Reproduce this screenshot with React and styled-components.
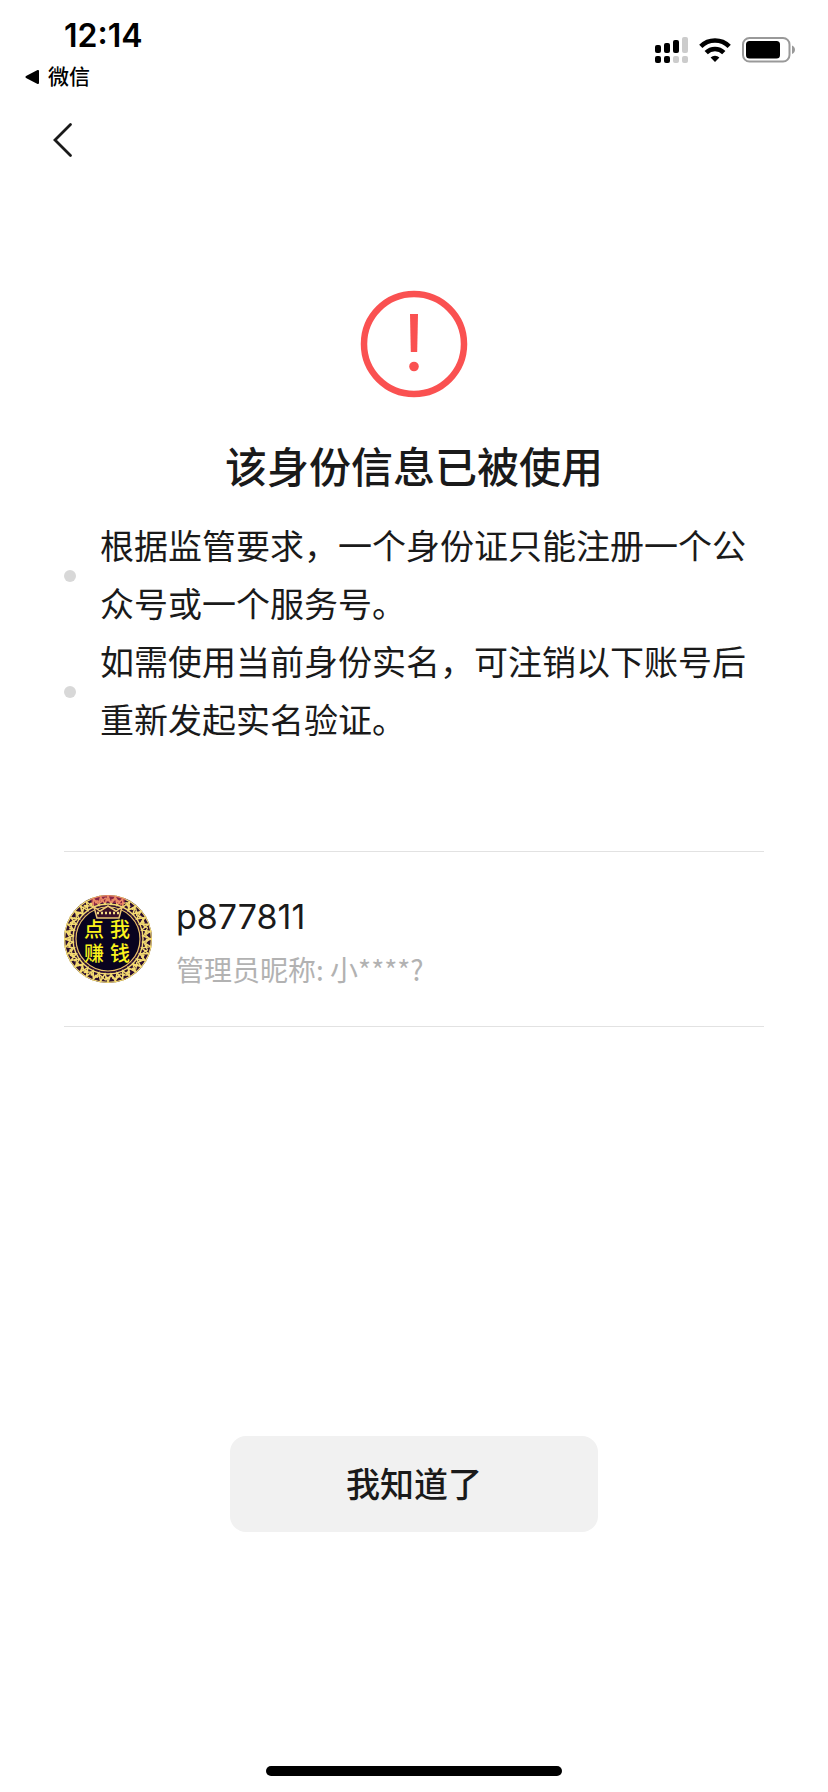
import styled, { createGlobalStyle } from "styled-components";

const GlobalStyle = createGlobalStyle`
  * {
    box-sizing: border-box;
  }
  body {
    margin: 0;
    background: #fff;
    color: #1a1a1a;
    font-family: Inter, "Noto Sans CJK SC", sans-serif;
  }
`;

const Page = styled.div`
  min-height: 100vh;
  display: flex;
  flex-direction: column;
`;

const StatusBar = styled.header`
  display: flex;
  justify-content: space-between;
  align-items: flex-start;
  padding: 16px 32px 0 24px;
  height: 100px;
  color: #000;
`;

const StatusLeft = styled.div`
  display: flex;
  flex-direction: column;
`;

const Time = styled.time`
  padding-left: 40px;
  font-size: 32px;
  line-height: 40px;
  font-weight: 600;
`;

const BackToApp = styled.a`
  display: flex;
  align-items: center;
  gap: 8px;
  color: #000;
  font-size: 21px;
  line-height: 42px;
  font-weight: 500;
  text-decoration: none;
`;

const StatusIcons = styled.div`
  display: flex;
  align-items: center;
  gap: 11px;
  padding-top: 21px;
`;

const Nav = styled.nav`
  display: flex;
  padding: 16px 44px;
`;

const BackButton = styled.button`
  display: flex;
  padding: 4px 8px;
  border: none;
  background: none;
  cursor: pointer;
`;

const Main = styled.main`
  flex-grow: 1;
  display: flex;
  flex-direction: column;
  padding: 110px 64px 0;
`;

const WarningIcon = styled.svg`
  display: block;
  align-self: center;
  flex-shrink: 0;
`;

const Title = styled.h1`
  margin: 40px 0 20px;
  font-size: 42px;
  line-height: 60px;
  font-weight: 500;
  text-align: center;
`;

const Reasons = styled.ul`
  list-style: none;
  margin: 0;
  padding: 0;
`;

const Reason = styled.li`
  display: flex;
  align-items: center;
  gap: 24px;
  font-size: 34px;
  line-height: 58px;

  &::before {
    content: "";
    flex-shrink: 0;
    width: 12px;
    height: 12px;
    border-radius: 50%;
    background: #d8d8d8;
  }
`;

const Account = styled.section`
  display: flex;
  align-items: center;
  gap: 24px;
  height: 176px;
  margin-top: 101px;
  border-top: 1px solid #e2e2e2;
  border-bottom: 1px solid #e2e2e2;
`;

const AccountText = styled.div`
  display: flex;
  flex-direction: column;
  gap: 4px;
  padding-top: 8px;
`;

const AccountName = styled.div`
  font-size: 34px;
  line-height: 48px;
`;

const AccountAdmin = styled.div`
  color: #b2b2b2;
  font-family: "Noto Sans CJK SC", sans-serif;
  font-size: 28px;
  line-height: 48px;
`;

const Footer = styled.footer`
  display: flex;
  flex-direction: column;
  align-items: center;
  padding-bottom: 16px;
`;

const ConfirmButton = styled.button`
  width: 368px;
  height: 96px;
  margin-bottom: 234px;
  padding: 0 0 4px;
  border: none;
  border-radius: 16px;
  background: #f1f1f1;
  color: #1a1a1a;
  font-family: inherit;
  font-size: 34px;
  font-weight: 500;
  cursor: pointer;
`;

const HomeIndicator = styled.div`
  width: 296px;
  height: 10px;
  border-radius: 5px;
  background: #000;
`;

const reasons = [
  "根据监管要求，一个身份证只能注册一个公众号或一个服务号。",
  "如需使用当前身份实名，可注销以下账号后重新发起实名验证。",
];

function SignalIcon() {
  return (
    <svg width="33" height="26" viewBox="0 0 33 26">
      <g fill="#000">
        <rect x="0" y="8" width="6" height="8" rx="2" />
        <rect x="9" y="6" width="6" height="10" rx="2" />
        <rect x="18" y="3" width="6" height="13" rx="2" />
        <rect x="0" y="19" width="6" height="7" rx="2" />
        <rect x="9" y="19" width="6" height="7" rx="2" />
      </g>
      <g fill="#ccc">
        <rect x="27" y="0" width="6" height="16" rx="2" />
        <rect x="18" y="19" width="6" height="7" rx="2" />
        <rect x="27" y="19" width="6" height="7" rx="2" />
      </g>
    </svg>
  );
}

function WifiIcon() {
  return (
    <svg width="32" height="24" viewBox="0 0 32 24">
      <g fill="none" stroke="#000" strokeWidth="4.6">
        <path d="M1.8 8.4a20.2 20.2 0 0 1 28.4 0" />
        <path d="M7.2 14.6a12.5 12.5 0 0 1 17.6 0" />
      </g>
      <path d="M16 24l-4.4-4.4a6.2 6.2 0 0 1 8.8 0z" fill="#000" />
    </svg>
  );
}

function BatteryIcon() {
  return (
    <svg width="54" height="26" viewBox="0 0 54 26">
      <rect x="1" y="1" width="46.5" height="23.5" rx="6.5" fill="none" stroke="#999" strokeWidth="2" />
      <rect x="4" y="4" width="34" height="17.5" rx="3.5" fill="#000" />
      <path d="M50 8.5c2 .8 3 2.4 3 4.300s-1 3.500-3 4.300z" fill="#999" />
    </svg>
  );
}

// points of a zigzag that runs round the avatar between two radii
function zigzag(inner, outer, count) {
  return Array.from({ length: count * 2 }, (_, i) => {
    const angle = (Math.PI * i) / count;
    const r = i % 2 ? inner : outer;
    return `${44 + r * Math.cos(angle)},${44 + r * Math.sin(angle)}`;
  }).join(" ");
}

function Avatar() {
  return (
    <svg width="88" height="88" viewBox="0 0 88 88">
      <circle cx="44" cy="44" r="44" fill="#2a0c30" />
      <g fill="none" stroke="#f3da72">
        <circle cx="44" cy="44" r="43.4" strokeWidth="1.2" />
        <polygon points={zigzag(35, 43, 36)} strokeWidth="1.5" />
        <polygon points={zigzag(37, 41, 23)} strokeWidth="1.2" />
        <circle cx="44" cy="44" r="39" strokeWidth="2.4" strokeDasharray="2 3 4 2" />
        <circle cx="44" cy="44" r="35" strokeWidth="1.4" />
      </g>
      <path d="M26 4a44 44 0 0 1 36 0l-3 7a36 36 0 0 0-30 0z" fill="#e23a5c" opacity=".5" />
      <circle cx="44" cy="44" r="32" fill="#09031f" stroke="#e8c068" strokeWidth="1.2" />
      <path d="M30 12l3 11h22l3-11-6 4-8-5-8 5z" fill="#3a1028" stroke="#edc977" strokeWidth="1.5" />
      <path d="M33 18h22" stroke="#f5df86" strokeWidth="2.5" strokeDasharray="2 2" />
      <g fill="#fbf31c" fontFamily="Noto Sans CJK SC, sans-serif" fontSize="20" fontWeight="500">
        <text x="20" y="42">
          点<tspan x="46">我</tspan>
        </text>
        <text x="20" y="66">
          赚<tspan x="46">钱</tspan>
        </text>
      </g>
    </svg>
  );
}

export default function App() {
  return (
    <>
      <GlobalStyle />
      <Page>
        <StatusBar>
          <StatusLeft>
            <Time>12:14</Time>
            <BackToApp href="#">
              <svg width="16" height="14" viewBox="0 0 16 14">
                <path d="M14 1v12L2.5 7z" stroke="#000" strokeWidth="2" strokeLinejoin="round" />
              </svg>
              微信
            </BackToApp>
          </StatusLeft>
          <StatusIcons>
            <SignalIcon />
            <WifiIcon />
            <BatteryIcon />
          </StatusIcons>
        </StatusBar>
        <Nav>
          <BackButton aria-label="返回">
            <svg width="22" height="40" viewBox="0 0 22 40" fill="none">
              <path d="M18.5 4.500L3 20l15.500 15.500" stroke="#1a1a1a" strokeWidth="2.8" strokeLinecap="round" />
            </svg>
          </BackButton>
        </Nav>
        <Main>
          <WarningIcon width="108" height="108" viewBox="0 0 108 108">
            <circle cx="54" cy="54" r="50" fill="none" stroke="#fa5151" strokeWidth="6.5" />
            <path d="M50 24h8l-.8 38h-6.400z" fill="#fa5151" />
            <circle cx="54" cy="76.5" r="4.8" fill="#fa5151" />
          </WarningIcon>
          <Title>该身份信息已被使用</Title>
          <Reasons>
            {reasons.map((reason) => (
              <Reason key={reason}>{reason}</Reason>
            ))}
          </Reasons>
          <Account>
            <Avatar />
            <AccountText>
              <AccountName>p877811</AccountName>
              <AccountAdmin>管理员昵称: 小****?</AccountAdmin>
            </AccountText>
          </Account>
        </Main>
        <Footer>
          <ConfirmButton>我知道了</ConfirmButton>
          <HomeIndicator />
        </Footer>
      </Page>
    </>
  );
}
